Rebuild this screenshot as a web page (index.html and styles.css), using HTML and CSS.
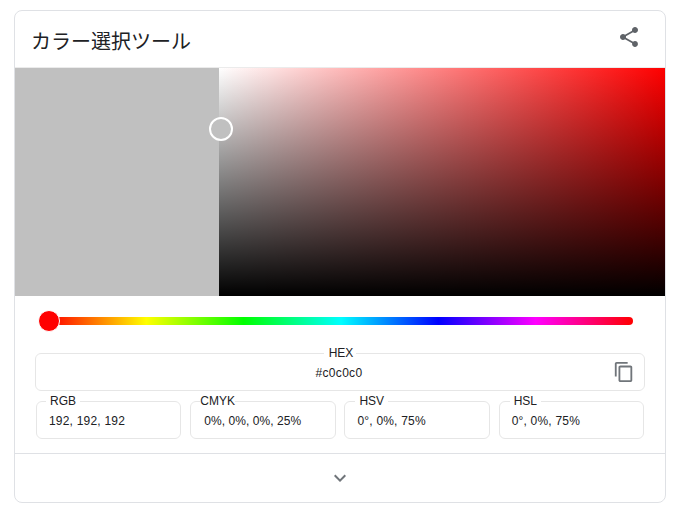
FILE: index.html
```html
<!DOCTYPE html>
<html lang="ja">
<head>
<meta charset="UTF-8" />
<meta name="viewport" content="width=device-width, initial-scale=1.0" />
<title>カラー選択ツール</title>
<link rel="stylesheet" href="styles.css">
</head>
<body>

<div class="card">
  <div class="card-header">
    <h2>カラー選択ツール</h2>
    <svg class="share-icon" viewBox="0 0 24 24" width="24" height="24"><path d="M18 16.08c-.76 0-1.44.3-1.96.77L8.91 12.7c.05-.23.09-.46.09-.7s-.04-.47-.09-.7l7.05-4.11c.54.5 1.25.81 2.04.81 1.66 0 3-1.34 3-3s-1.34-3-3-3-3 1.34-3 3c0 .24.04.47.09.7L8.04 9.81C7.5 9.31 6.79 9 6 9c-1.66 0-3 1.34-3 3s1.34 3 3 3c.79 0 1.5-.31 2.04-.81l7.12 4.16c-.05.21-.08.43-.08.65 0 1.61 1.31 2.92 2.92 2.92 1.61 0 2.92-1.31 2.92-2.92s-1.31-2.92-2.92-2.92z"/></svg>
  </div>

  <div class="canvas">
    <div class="swatch"></div>
    <div class="picker">
      <div class="picker-marker"></div>
    </div>
  </div>

  <div class="hue-row">
    <div class="hue-track"></div>
    <div class="hue-handle"></div>
  </div>

  <fieldset class="field field-hex">
    <legend>HEX</legend>
    <div class="value">#c0c0c0</div>
    <svg class="copy-icon" viewBox="0 0 24 24" width="22" height="22"><path d="M16 1H4c-1.1 0-2 .9-2 2v14h2V3h12V1zm3 4H8c-1.1 0-2 .9-2 2v14c0 1.1.9 2 2 2h11c1.1 0 2-.9 2-2V7c0-1.1-.9-2-2-2zm0 16H8V7h11v14z"/></svg>
  </fieldset>

  <div class="field-grid">
    <fieldset class="field field-rgb">
      <legend>RGB</legend>
      <div class="value">192, 192, 192</div>
    </fieldset>
    <fieldset class="field field-cmyk">
      <legend>CMYK</legend>
      <div class="value">0%, 0%, 0%, 25%</div>
    </fieldset>
    <fieldset class="field field-hsv">
      <legend>HSV</legend>
      <div class="value">0°, 0%, 75%</div>
    </fieldset>
    <fieldset class="field field-hsl">
      <legend>HSL</legend>
      <div class="value">0°, 0%, 75%</div>
    </fieldset>
  </div>

  <div class="card-footer">
    <svg class="chevron" viewBox="0 0 24 24" width="24" height="24"><path d="M16.59 8.59L12 13.17 7.41 8.59 6 10l6 6 6-6z"/></svg>
  </div>
</div>

</body>
</html>
```

FILE: styles.css
```css
body {
  margin: 10px 9px 0 14px;
  background: #fff;
  font-family: "Liberation Sans", Arial, "Noto Sans CJK JP", sans-serif;
  color: #202124;
}

.card {
  width: 652px;
  height: 493px;
  box-sizing: border-box;
  border: 1px solid #dfe1e5;
  border-radius: 8px;
  overflow: hidden;
  display: flex;
  flex-direction: column;
}

.card-header {
  height: 56px;
  padding: 0 24px 0 16px;
  display: flex;
  align-items: center;
  justify-content: space-between;
  flex-shrink: 0;
  border-bottom: 1px solid #ebebeb;
}

.card-header h2 {
  margin: 3px 0 0;
  font-size: 20px;
  font-weight: 400;
  font-family: "Noto Sans CJK JP", sans-serif;
}

.share-icon {
  fill: #5f6368;
  margin-top: -5px;
}

.canvas {
  height: 228px;
  display: flex;
  flex-shrink: 0;
}

.swatch {
  width: 204px;
  background: #c0c0c0;
}

.picker {
  flex: 1;
  position: relative;
  background: linear-gradient(to top, #000, transparent), linear-gradient(to right, #fff, #f00);
}

.picker-marker {
  position: absolute;
  left: -10px;
  top: 49px;
  width: 20px;
  height: 20px;
  border: 2px solid #fff;
  border-radius: 50%;
  background: #c0c0c0;
}

.hue-row {
  position: relative;
  height: 50px;
  flex-shrink: 0;
  display: flex;
  align-items: center;
  padding: 0 32px 0 34px;
}

.hue-track {
  flex: 1;
  height: 8px;
  border-radius: 4px;
  background: linear-gradient(to right, #f00, #ff0, #0f0, #0ff, #00f, #f0f, #f00);
}

.hue-handle {
  position: absolute;
  left: 23px;
  top: 14px;
  width: 20px;
  height: 20px;
  border: 1px solid #fff;
  border-radius: 50%;
  background: #f00;
}

.field {
  margin: 0;
  padding: 0 12px;
  border: 1px solid #e6e6e6;
  border-radius: 6px;
  min-width: 0;
  position: relative;
}

.field legend {
  font-size: 12px;
  line-height: 14px;
  padding: 0 4px;
}

.field .value {
  font-size: 12px;
  line-height: 14px;
  padding: 6px 0 10px;
  letter-spacing: 0.2px;
}

.field-hex {
  margin: 0 20px;
  height: 45px;
  box-sizing: border-box;
  text-align: center;
}

.field-hex legend {
  margin: 0 auto;
  position: relative;
  left: 1px;
}

.field-hex .value {
  padding-right: 2px;
  letter-spacing: 0.3px;
}

.copy-icon {
  position: absolute;
  right: 9px;
  top: 1px;
  fill: #70757a;
}

.field-grid {
  margin: 3px 21px 0;
  display: grid;
  grid-template-columns: repeat(4, 1fr);
  gap: 8.9px;
}

.field-rgb legend {
  margin-left: -3px;
}

.field-cmyk legend {
  margin-left: -3px;
  padding: 0;
}

.field-cmyk .value {
  padding-left: 1px;
  letter-spacing: 0.07px;
}

.field-hsv legend,
.field-hsl legend {
  margin-left: -2px;
}

.card-footer {
  flex: 1;
  margin-top: 14px;
  border-top: 1px solid #dfe1e5;
  display: flex;
  align-items: center;
  justify-content: center;
}

.chevron {
  fill: #70757a;
}
```
